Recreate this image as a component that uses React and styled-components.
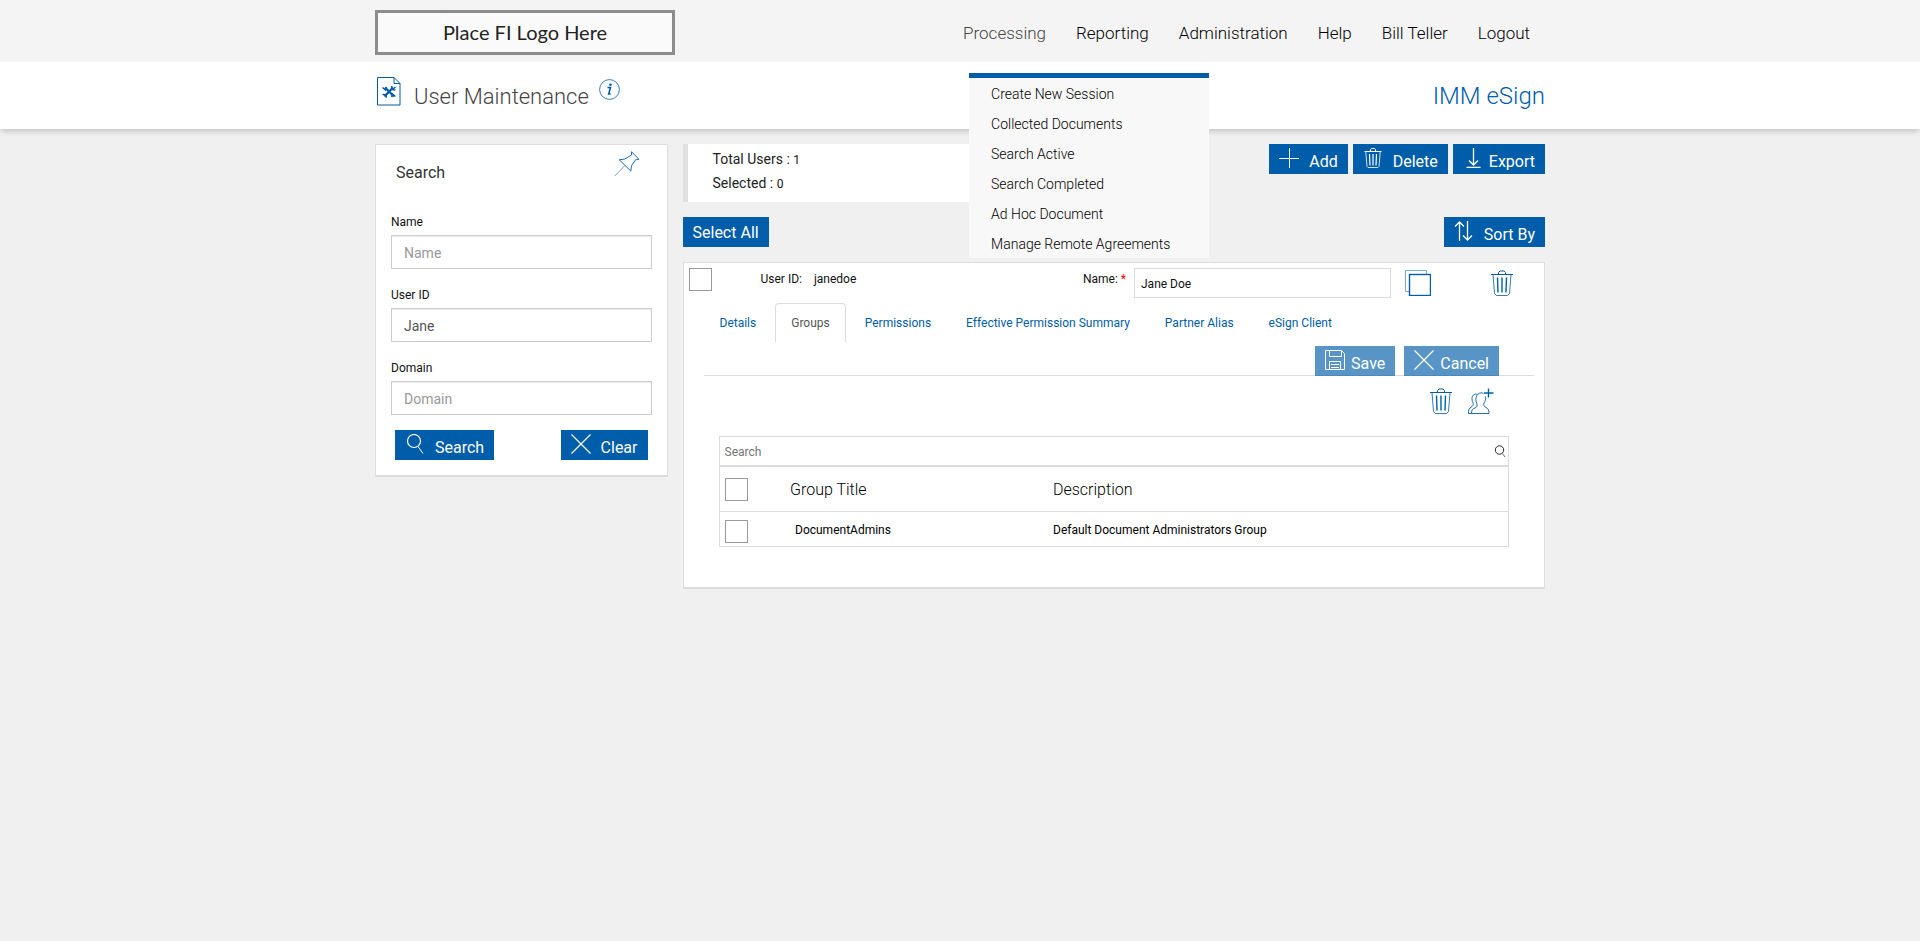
import React from "react";
import styled, { createGlobalStyle } from "styled-components";

const BLUE = "#005da9";
const LINE = "#dcdcdc";

const GlobalStyle = createGlobalStyle`
  *, *::before, *::after { box-sizing: border-box; }
  body {
    margin: 0;
    min-height: 100vh;
    background: #f0f0f0;
    color: #111;
    font-family: Roboto, "Liberation Sans", sans-serif;
    font-size: 12px;
    line-height: 16px;
  }
  button, input { font: inherit; color: inherit; border-radius: 0; }
  ul { list-style: none; margin: 0; padding: 0; }
  h1, h2, p, dl, dd { margin: 0; }
  a { color: inherit; text-decoration: none; }
`;

const Container = styled.div`
  width: 100%;
  max-width: 1170px;
  margin: 0 auto;
`;

/* ---------- header ---------- */
const TopBar = styled.header`
  background: #f4f4f4;
`;
const TopBarInner = styled(Container)`
  display: flex;
  justify-content: space-between;
  align-items: flex-start;
  height: 62px;
`;
const Logo = styled.div`
  width: 300px;
  height: 45px;
  margin-top: 10px;
  padding-bottom: 2px;
  display: flex;
  align-items: center;
  justify-content: center;
  border: 3px solid #8c8c8c;
  background: #fafafa;
  color: #222;
  font-family: Lato, sans-serif;
  font-size: 20px;
  line-height: 24px;
`;
const NavList = styled.ul`
  display: flex;
`;
const NavItem = styled.li`
  position: relative;
  padding: 0 15px;
  font-size: 17px;
  font-weight: 300;
  line-height: 62px;
  color: ${(p) => (p.$active ? "#444" : "#000")};
`;
const NavLink = styled.a`
  padding-top: 2px;
  display: block;
`;
const Menu = styled.ul`
  position: absolute;
  z-index: 5;
  top: 73px;
  left: 21px;
  width: 240px;
  border-top: 5px solid ${BLUE};
  background: #f8f8f8;
`;
const MenuLink = styled.a`
  display: block;
  padding: 2px 22px 0;
  font-size: 14px;
  line-height: 28px;
  color: #000;
  white-space: nowrap;
`;

/* ---------- title bar ---------- */
const TitleBar = styled.div`
  background: #fff;
  box-shadow: 0 4px 5px -1px rgba(0, 0, 0, 0.16);
`;
const TitleInner = styled(Container)`
  display: flex;
  justify-content: space-between;
  height: 67px;
`;
const TitleGroup = styled.div`
  display: flex;
  align-items: flex-start;
`;
const PageIcon = styled.span`
  display: flex;
  margin: 14px 13px 0 2px;
`;
const Title = styled.h1`
  font-size: 22px;
  font-weight: 300;
  line-height: 28px;
  margin-top: 21px;
  color: #444;
`;
const InfoButton = styled.button`
  display: flex;
  margin: 17px 0 0 10px;
  padding: 0;
  border: 0;
  background: none;
`;
const Product = styled.p`
  font-size: 24px;
  font-weight: 300;
  line-height: 28px;
  margin-top: 20px;
  color: ${BLUE};
`;

/* ---------- shared controls ---------- */
const BlueButton = styled.button`
  display: inline-flex;
  height: 30px;
  padding: 0 10px;
  gap: ${(p) => p.$gap ?? 10}px;
  border: 0;
  background: ${BLUE};
  color: #fff;
  opacity: ${(p) => (p.disabled ? 0.65 : 1)};
  font-size: 16px;
  line-height: 30px;
  white-space: nowrap;

  svg { margin-top: 4px; }
`;
const ButtonText = styled.span`
  padding-top: ${(p) => (p.$centered ? 1 : 3)}px;
`;
const IconButton = styled.button`
  display: flex;
  padding: 0;
  border: 0;
  background: none;
  color: ${BLUE};
`;
const Check = styled.input`
  appearance: none;
  display: block;
  width: 23px;
  height: 23px;
  margin: 0;
  border: 1px solid #999;
  background: #fff;
`;
const Panel = styled.section`
  border: 1px solid ${LINE};
  border-bottom-width: 2px;
  background: #fff;
`;

/* ---------- body ---------- */
const Body = styled(Container)`
  display: flex;
  align-items: flex-start;
  gap: 15px;
  padding-top: 15px;
`;
const SearchPanel = styled(Panel)`
  flex: 0 0 25%;
  padding: 0 15px 15px;
`;
const SearchHead = styled.div`
  display: flex;
  justify-content: space-between;
  padding: 6px 12px 0 5px;
  height: 69px;
`;
const SearchTitle = styled.h2`
  font-size: 16px;
  font-weight: 400;
  line-height: 20px;
  margin-top: 12px;
  color: #333;
`;
const Field = styled.div`
  display: flex;
  flex-direction: column;
  gap: 5px;
  margin-bottom: 18px;
`;
const TextBox = styled.input`
  width: 100%;
  height: 34px;
  padding: 2px 12px 0;
  border: 1px solid #ccc;
  box-shadow: inset 0 1px 1px rgba(0, 0, 0, 0.08);
  background: #fff;
  color: #555;
  font-size: 14px;
  &::placeholder { color: #999; opacity: 1; }
`;
const SearchActions = styled.div`
  display: flex;
  justify-content: space-between;
  margin-top: -3px;
  padding: 0 4px;
`;

const Main = styled.main`
  flex: 1;
  min-width: 0;
`;
const Row = styled.div`
  display: flex;
  justify-content: space-between;
  align-items: flex-start;
  margin-bottom: 15px;
`;
const Stats = styled.div`
  width: 50%;
  height: 58px;
  padding: 3px 25px;
  border-left: 5px solid #e0e0e0;
  background: #fff;
  color: #222;
  font-size: 14px;
  line-height: 24px;
`;
const Count = styled.span`
  font-size: 12px;
  line-height: 12px;
  color: #111;
`;
const ButtonGroup = styled.div`
  display: flex;
  gap: 5px;
`;

const UserCard = styled(Panel)`
  padding-bottom: 40px;
`;
const UserHead = styled.div`
  display: grid;
  grid-template-columns: 72px 1fr 51px 257px 148px;
  height: 40px;
  padding: 5px;
`;
const UserId = styled.dl`
  display: flex;
  gap: 12px;
  padding-top: 3px;
`;
const NameLabel = styled.label`
  padding-top: 3px;
`;
const Required = styled.span`
  color: red;
`;
const NameBox = styled.input`
  height: 30px;
  padding: 1px 6px 0;
  border: 1px solid ${LINE};
  background: #fff;
`;
const UserIcons = styled.div`
  display: flex;
  justify-content: space-between;
  align-items: flex-start;
  padding: 2px 24px 0 14px;
`;

const Tabs = styled.nav`
  display: flex;
  gap: 3px;
  padding-left: 20px;
`;
const Tab = styled.a`
  height: 39px;
  padding: 11px 15px;
  border: 1px solid ${(p) => (p.$active ? LINE : "transparent")};
  border-bottom: 0;
  border-radius: 4px 4px 0 0;
  color: ${(p) => (p.$active ? "#555" : BLUE)};
`;
const SaveBar = styled.div`
  display: flex;
  justify-content: flex-end;
  gap: 9px;
  height: 34px;
  margin: 0 10px 0 20px;
  padding: 4px 35px 0 0;
  border-bottom: 1px solid ${LINE};
`;
const GroupTools = styled.div`
  display: flex;
  justify-content: flex-end;
  gap: 14px;
  padding: 12px 50px 22px 0;
`;
const GroupArea = styled.div`
  margin: 0 35px;
`;
const GroupSearch = styled.label`
  display: flex;
  align-items: center;
  height: 30px;
  padding: 0 2px 0 5px;
  border: 1px solid ${LINE};
`;
const GroupSearchInput = styled.input`
  flex: 1;
  height: 28px;
  padding: 2px 0 0;
  border: 0;
  outline: 0;
  &::placeholder { color: #757575; opacity: 1; }
`;
const GroupTable = styled.table`
  width: 100%;
  table-layout: fixed;
  border-collapse: collapse;
  border: 1px solid ${LINE};
`;
const HeadCell = styled.th`
  width: ${(p) => p.$width ?? "auto"};
  height: 45px;
  padding: ${(p) => (p.$check ? "0 0 0 5px" : "2px 0 0 5px")};
  border-bottom: 1px solid ${LINE};
  font-size: 16px;
  font-weight: 300;
  text-align: left;
  color: #000;
`;
const Cell = styled.td`
  height: 35px;
  padding: ${(p) => (p.$check ? "5px 0 0 5px" : p.$indent ? "2px 0 0 10px" : "2px 0 0 5px")};
  color: #000;
`;

/* ---------- icons ---------- */
const Icon = ({ size = 20, vb = 20, children }) => (
  <svg width={size} height={size} viewBox={`0 0 ${vb} ${vb}`} fill="none" stroke="currentColor" strokeWidth="1" aria-hidden="true">
    {children}
  </svg>
);
const PlusIcon = () => <Icon><path d="M10.5 0v20M0 10.5h20" /></Icon>;
const CrossIcon = () => <Icon><path d="M0.5 0.5l19 19M19.5 0.5l-19 19" strokeWidth="1.2" /></Icon>;
const LensIcon = () => (
  <Icon><ellipse cx="9" cy="7" rx="6.5" ry="6.5" strokeWidth="1.2" /><path d="M13 12.5l5 7" /></Icon>
);
const ExportIcon = () => (
  <Icon><path d="M10.5 0v16.5M6 12.5l4.5 4.5 4.5-4.5M3.5 19.5h14" strokeWidth="1.3" /></Icon>
);
const SortIcon = () => (
  <Icon><path d="M5.5 20V1M1 5.5L5.5 1l4.5 4.5M13.5 0v19M9 14.5l4.5 4.5 4.5-4.5" strokeWidth="1.3" /></Icon>
);
const SaveIcon = () => (
  <Icon>
    <path d="M0.5 0.5h16l3 3v16h-19zM4.5 0.5v6h12v-6M4.5 19.5v-8h11v8M6 14.5h8M6 17.5h8" />
  </Icon>
);
const TrashIcon = () => (
  <Icon size={26} vb={26}>
    <path d="M2 4.500h22M9.500 4.500v-2l1.500-1.500h4l1.500 1.500v2" />
    <path d="M4 4.500l1.500 19 2 2h11l2-2 1.500-19" opacity=".8" />
    <path d="M8.500 7.500l.5 15M13 7.500v15M17.500 7.500l-.5 15" strokeWidth="1.400" />
  </Icon>
);
const SmallTrashIcon = () => (
  <Icon>
    <path d="M1.500 3.500h17M7.500 3.500v-2l1-1h3l1 1v2" />
    <path d="M2.800 4l1.200 14.500 1 1h10l1-1L17.200 4" opacity=".8" />
    <path d="M6.500 6l.5 11.500M10 6v11.500M13.500 6L13 17.500" strokeWidth="1.200" />
  </Icon>
);
const CopyIcon = () => (
  <Icon size={26} vb={26}>
    <path d="M4 21.500H.5V.5h21V4" opacity=".5" />
    <rect x="4.500" y="4.500" width="21" height="21" strokeWidth="1.400" />
  </Icon>
);
const PinIcon = () => (
  <Icon size={26} vb={26}>
    <path d="M17.500.8l7.500 7.400-3.400.6-4 5.700-.8 5.600L5.300 8.800l5.500-.8 6.800-4z" strokeWidth=".9" />
    <path d="M10.800 14.500L.8 25" strokeWidth=".8" opacity=".7" />
  </Icon>
);
const AddPeopleIcon = () => (
  <Icon size={26} vb={26}>
    <path d="M20.500 .5v9M16 5h9.500" strokeWidth="1.400" />
    <path d="M17.500 8.500c.6 2.500-.3 4.800-1.500 6.500-.8 2 0 3.500 2 4.500 2 .8 3 2.500 3 6H3.500c0-3.500 1-4.800 3.500-5.500 2-.8 2.500-2.500 1.800-4.500-1-2-1.500-5.500.2-8 1.200-2.500 4-3.200 6.500-2.200" strokeWidth=".9" />
    <path d="M9.200 6.300c-3-.8-5.200 1.200-5.200 4.200 0 2.500.8 3.800 1.200 5 .4 1.600-.5 2.800-2.200 3.700C1 20.300.5 22 .5 25.500h3" strokeWidth=".9" />
  </Icon>
);
const SmallLensIcon = () => (
  <Icon size={12} vb={12}><circle cx="5.500" cy="5" r="4.200" strokeWidth=".9" /><path d="M8.500 8.500l2.500 3.500" strokeWidth=".6" /></Icon>
);
const ToolsPageIcon = () => (
  <svg width="24" height="30" viewBox="0 0 24 30" fill="none" stroke={BLUE} aria-hidden="true">
    <path d="M.5 1.500h16.500l6 6v21.500H.5zM17 1.500v6h6" />
    <path d="M8 11.500l9 9M16 11.500l-8.500 9" strokeWidth="2.200" />
    <path d="M5.500 11.500l3 2.500 1-3M18.500 11l-3 2.500M14.500 10l.8 3.500 3.200.5M18.500 20.500l-3-2.500-.8 3M5.500 18.500l3.500.2.300 3" strokeWidth="1.500" />
  </svg>
);
const InfoIcon = () => (
  <svg width="21" height="21" viewBox="0 0 21 21" fill="none" stroke={BLUE} aria-hidden="true">
    <circle cx="10.500" cy="10.500" r="9.900" strokeWidth=".8" />
    <path d="M8.500 8.500h3l-1.800 6.500h2" strokeWidth="1.600" />
    <circle cx="11.500" cy="5.800" r="1.300" fill={BLUE} stroke="none" />
  </svg>
);

const ActionButton = ({ icon, children, gap, ...rest }) => (
  <BlueButton type="button" $gap={gap} {...rest}>
    {icon}
    <ButtonText>{children}</ButtonText>
  </BlueButton>
);

const menuItems = [
  "Create New Session",
  "Collected Documents",
  "Search Active",
  "Search Completed",
  "Ad Hoc Document",
  "Manage Remote Agreements",
];
const navItems = ["Processing", "Reporting", "Administration", "Help", "Bill Teller", "Logout"];
const tabs = ["Details", "Groups", "Permissions", "Effective Permission Summary", "Partner Alias", "eSign Client"];
const fields = [
  { id: "name", label: "Name" },
  { id: "user-id", label: "User ID", value: "Jane" },
  { id: "domain", label: "Domain" },
];

export default function App() {
  return (
    <>
      <GlobalStyle />
      <TopBar>
        <TopBarInner>
          <Logo>Place FI Logo Here</Logo>
          <nav aria-label="Main">
            <NavList>
              {navItems.map((item, i) => (
                <NavItem key={item} $active={i === 0}>
                  <NavLink href="#">{item}</NavLink>
                  {i === 0 && (
                    <Menu>
                      {menuItems.map((m) => (
                        <li key={m}><MenuLink href="#">{m}</MenuLink></li>
                      ))}
                    </Menu>
                  )}
                </NavItem>
              ))}
            </NavList>
          </nav>
        </TopBarInner>
      </TopBar>

      <TitleBar>
        <TitleInner>
          <TitleGroup>
            <PageIcon><ToolsPageIcon /></PageIcon>
            <Title>User Maintenance</Title>
            <InfoButton type="button" aria-label="Information"><InfoIcon /></InfoButton>
          </TitleGroup>
          <Product>IMM eSign</Product>
        </TitleInner>
      </TitleBar>

      <Body>
        <SearchPanel>
          <SearchHead>
            <SearchTitle>Search</SearchTitle>
            <IconButton type="button" aria-label="Pin"><PinIcon /></IconButton>
          </SearchHead>
          {fields.map((f) => (
            <Field key={f.id}>
              <label htmlFor={f.id}>{f.label}</label>
              <TextBox id={f.id} type="text" placeholder={f.label} defaultValue={f.value} />
            </Field>
          ))}
          <SearchActions>
            <ActionButton icon={<LensIcon />}>Search</ActionButton>
            <ActionButton icon={<CrossIcon />}>Clear</ActionButton>
          </SearchActions>
        </SearchPanel>

        <Main>
          <Row>
            <Stats>
              <p>Total Users : <Count>1</Count></p>
              <p>Selected : <Count>0</Count></p>
            </Stats>
            <ButtonGroup>
              <ActionButton icon={<PlusIcon />}>Add</ActionButton>
              <ActionButton icon={<SmallTrashIcon />}>Delete</ActionButton>
              <ActionButton icon={<ExportIcon />} gap={6}>Export</ActionButton>
            </ButtonGroup>
          </Row>
          <Row>
            <BlueButton type="button">
              <ButtonText $centered>Select All</ButtonText>
            </BlueButton>
            <ActionButton icon={<SortIcon />}>Sort By</ActionButton>
          </Row>

          <UserCard>
            <UserHead>
              <Check type="checkbox" aria-label="Select janedoe" />
              <UserId><dt>User ID:</dt><dd>janedoe</dd></UserId>
              <NameLabel htmlFor="user-name">Name: <Required>*</Required></NameLabel>
              <NameBox id="user-name" type="text" defaultValue="Jane Doe" />
              <UserIcons>
                <IconButton type="button" aria-label="Copy user"><CopyIcon /></IconButton>
                <IconButton type="button" aria-label="Delete user"><TrashIcon /></IconButton>
              </UserIcons>
            </UserHead>
            <Tabs aria-label="User sections">
              {tabs.map((t) => (
                <Tab key={t} href="#" $active={t === "Groups"}>{t}</Tab>
              ))}
            </Tabs>
            <SaveBar>
              <ActionButton icon={<SaveIcon />} gap={6} disabled>Save</ActionButton>
              <ActionButton icon={<CrossIcon />} gap={6} disabled>Cancel</ActionButton>
            </SaveBar>
            <GroupTools>
              <IconButton type="button" aria-label="Remove groups"><TrashIcon /></IconButton>
              <IconButton type="button" aria-label="Add groups"><AddPeopleIcon /></IconButton>
            </GroupTools>
            <GroupArea>
              <GroupSearch>
                <GroupSearchInput type="text" placeholder="Search" aria-label="Search groups" />
                <SmallLensIcon />
              </GroupSearch>
              <GroupTable>
                <thead>
                  <tr>
                    <HeadCell $check $width="66px"><Check type="checkbox" aria-label="Select all groups" /></HeadCell>
                    <HeadCell $width="263px">Group Title</HeadCell>
                    <HeadCell>Description</HeadCell>
                  </tr>
                </thead>
                <tbody>
                  <tr>
                    <Cell $check><Check type="checkbox" aria-label="Select DocumentAdmins" /></Cell>
                    <Cell $indent>DocumentAdmins</Cell>
                    <Cell>Default Document Administrators Group</Cell>
                  </tr>
                </tbody>
              </GroupTable>
            </GroupArea>
          </UserCard>
        </Main>
      </Body>
    </>
  );
}
